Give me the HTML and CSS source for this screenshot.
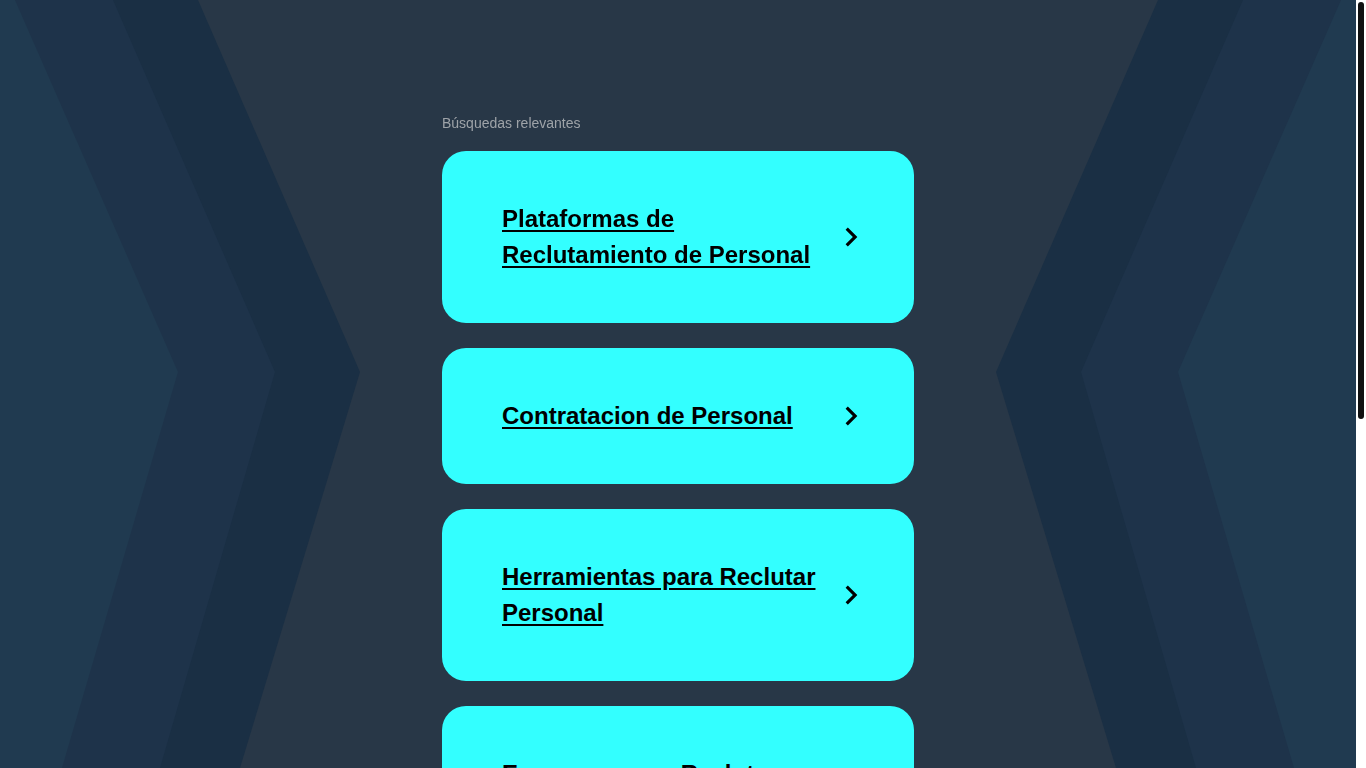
FILE: index.html
```html
<!DOCTYPE html>
<html lang="es">
<head>
<meta charset="utf-8">
<title>Búsquedas relevantes</title>
<link rel="stylesheet" href="styles.css">
</head>
<body>
<svg class="bg" viewBox="0 0 1356 768" preserveAspectRatio="none" aria-hidden="true">
  <rect x="0" y="0" width="1356" height="768" fill="#283747"/>
  <polygon points="0,0 198,0 360,372 240,768 0,768" fill="#1a2f44"/>
  <polygon points="0,0 113,0 275,372 160,768 0,768" fill="#1e334a"/>
  <polygon points="0,0 15,0 178,372 62,768 0,768" fill="#203a50"/>
  <polygon points="1356,0 1158,0 996,372 1116,768 1356,768" fill="#1a2f44"/>
  <polygon points="1356,0 1243,0 1081,372 1196,768 1356,768" fill="#1e334a"/>
  <polygon points="1356,0 1341,0 1178,372 1294,768 1356,768" fill="#203a50"/>
</svg>
<div class="scrollbar" aria-hidden="true"><div class="thumb"></div></div>
<main class="wrap">
  <div class="label">Búsquedas relevantes</div>
  <ul class="list">
    <li><a class="card" href="#"><span class="text">Plataformas de Reclutamiento de Personal</span><svg class="chev" viewBox="0 0 24 24"><path d="M10 6L8.59 7.41 13.17 12l-4.58 4.59L10 18l6-6z"/></svg></a></li>
    <li><a class="card" href="#"><span class="text">Contratacion de Personal</span><svg class="chev" viewBox="0 0 24 24"><path d="M10 6L8.59 7.41 13.17 12l-4.58 4.59L10 18l6-6z"/></svg></a></li>
    <li><a class="card" href="#"><span class="text">Herramientas para Reclutar Personal</span><svg class="chev" viewBox="0 0 24 24"><path d="M10 6L8.59 7.41 13.17 12l-4.58 4.59L10 18l6-6z"/></svg></a></li>
    <li><a class="card" href="#"><span class="text">Empresas para Reclutar Personal</span><svg class="chev" viewBox="0 0 24 24"><path d="M10 6L8.59 7.41 13.17 12l-4.58 4.59L10 18l6-6z"/></svg></a></li>
    <li><a class="card" href="#"><span class="text">Software de Recursos Humanos</span><svg class="chev" viewBox="0 0 24 24"><path d="M10 6L8.59 7.41 13.17 12l-4.58 4.59L10 18l6-6z"/></svg></a></li>
    <li><a class="card" href="#"><span class="text">Ofertas de Empleo</span><svg class="chev" viewBox="0 0 24 24"><path d="M10 6L8.59 7.41 13.17 12l-4.58 4.59L10 18l6-6z"/></svg></a></li>
  </ul>
</main>
</body>
</html>
```
FILE: styles.css
```css
html {
  background: #283747;
}
body {
  margin: 0 10px 0 0;
  font-family: "Liberation Sans", Arial, sans-serif;
}
.bg {
  position: fixed;
  top: 0;
  left: 0;
  width: calc(100% - 10px);
  height: 100vh;
  z-index: -1;
  display: block;
}
.scrollbar {
  position: fixed;
  top: 0;
  right: 0;
  width: 10px;
  height: 100vh;
  background: #ffffff;
  z-index: 10;
}
.thumb {
  margin: 2px 2px 0;
  width: 6px;
  height: 417px;
  background: #111111;
  border-radius: 3px;
}
.wrap {
  width: 472px;
  margin: 0 auto;
  padding: 115px 0 120px;
}
.label {
  font-size: 14px;
  line-height: 16px;
  color: #9ea3a8;
  margin-bottom: 20px;
}
.list {
  list-style: none;
  margin: 0;
  padding: 0;
  display: flex;
  flex-direction: column;
  gap: 25px;
}
.card {
  display: flex;
  align-items: center;
  gap: 12px;
  padding: 50px 44px 50px 60px;
  background: #33ffff;
  border-radius: 24px;
  color: #000000;
  text-decoration: none;
}
.text {
  flex: 1;
  font-size: 24px;
  line-height: 36px;
  font-weight: bold;
  text-decoration: underline;
  text-underline-offset: 3px;
}
.chev {
  width: 38px;
  height: 38px;
  margin: -1px 0;
  flex: none;
  fill: #000000;
}
```
